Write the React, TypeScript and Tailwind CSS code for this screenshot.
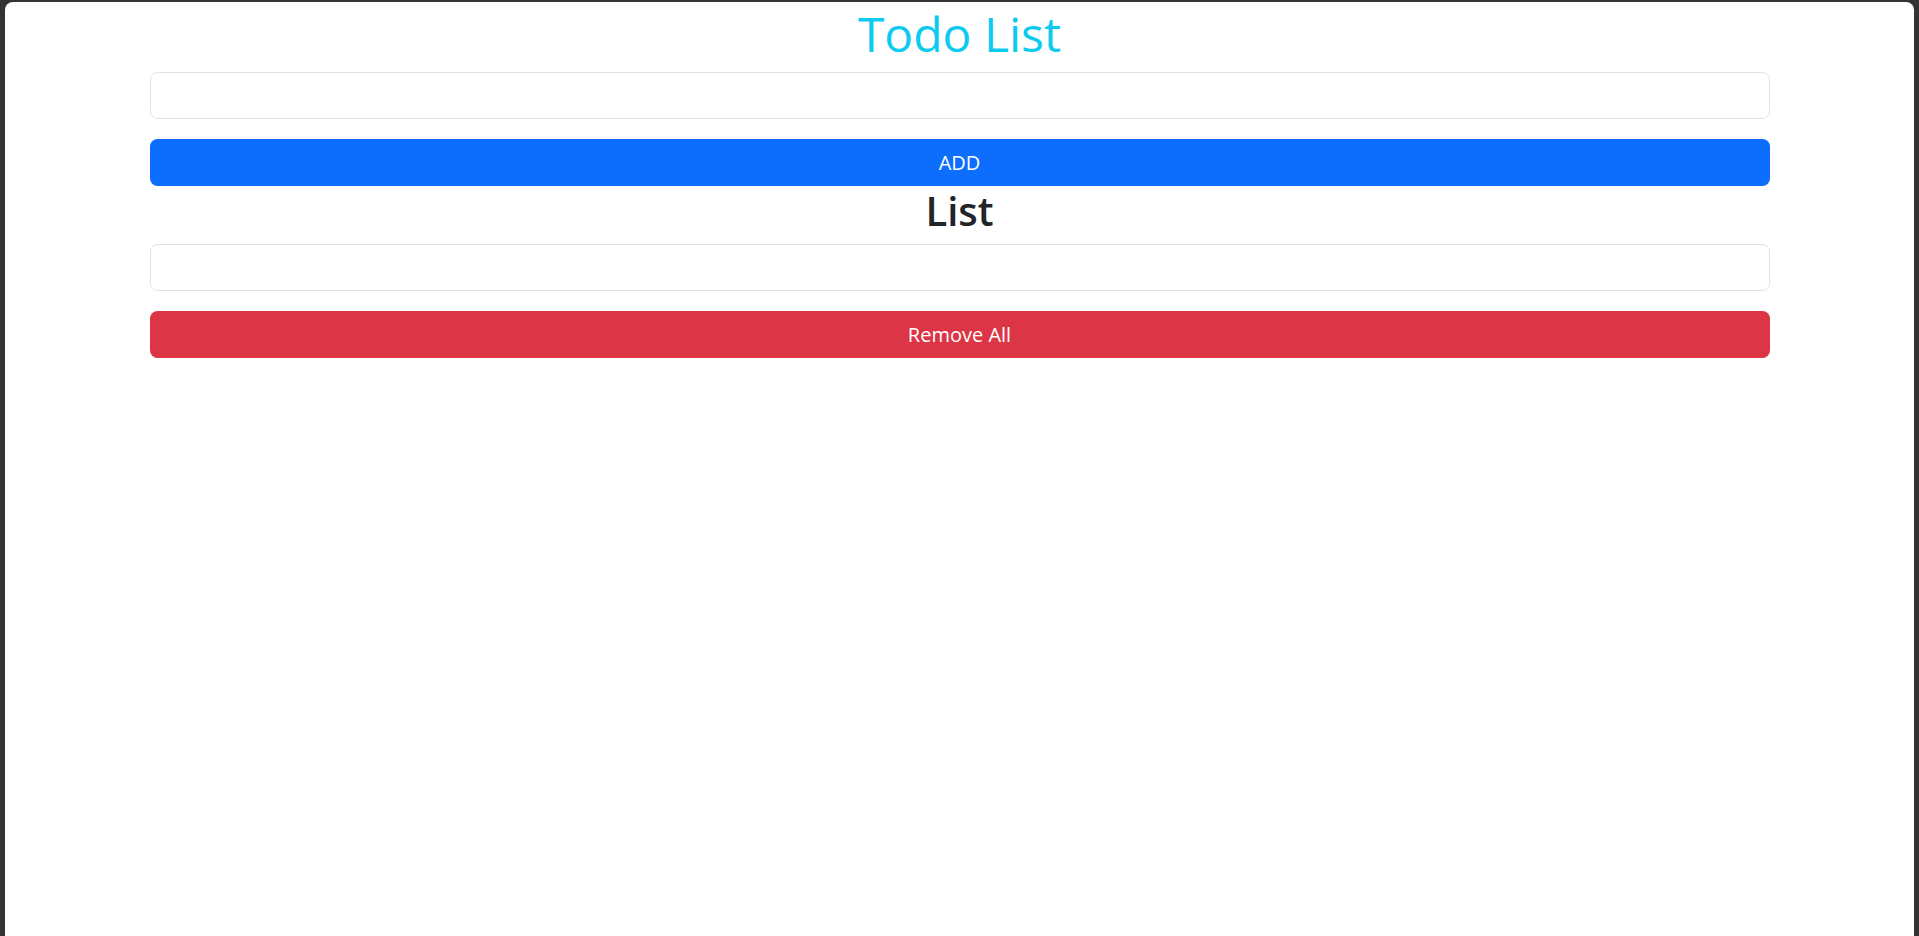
export default function App() {
  return (
    <div className="h-screen bg-[#333333] pt-[2px] px-[5px] overflow-hidden" style={{ fontFamily: '"Open Sans", "Noto Sans", sans-serif' }}>
      <div className="h-full bg-white rounded-t-[8px]">
        <div className="mx-auto w-[1650px] px-[15px]">
          <h1 className="text-center text-[48px] leading-[60px] pt-[2px] h-[60px] font-medium text-[#0dcaf0] mb-[10px]">Todo List</h1>
          <input
            type="text"
            className="block w-full h-[47px] rounded-[7.5px] border border-[#dee2e6] px-[15px] text-[20px] text-[#212529] outline-none"
          />
          <button className="mt-[20px] block w-full h-[47px] rounded-[7.5px] bg-[#0d6efd] text-white text-[20px]">
            ADD
          </button>
          <h2 className="text-center text-[40px] leading-[48px] pt-[1px] h-[48px] font-semibold text-[#212529] mb-[10px]">List</h2>
          <input
            type="text"
            className="block w-full h-[47px] rounded-[7.5px] border border-[#dee2e6] px-[15px] text-[20px] text-[#212529] outline-none"
          />
          <button className="mt-[20px] block w-full h-[47px] rounded-[7.5px] bg-[#dc3545] text-white text-[20px]">
            Remove All
          </button>
        </div>
      </div>
    </div>
  );
}
